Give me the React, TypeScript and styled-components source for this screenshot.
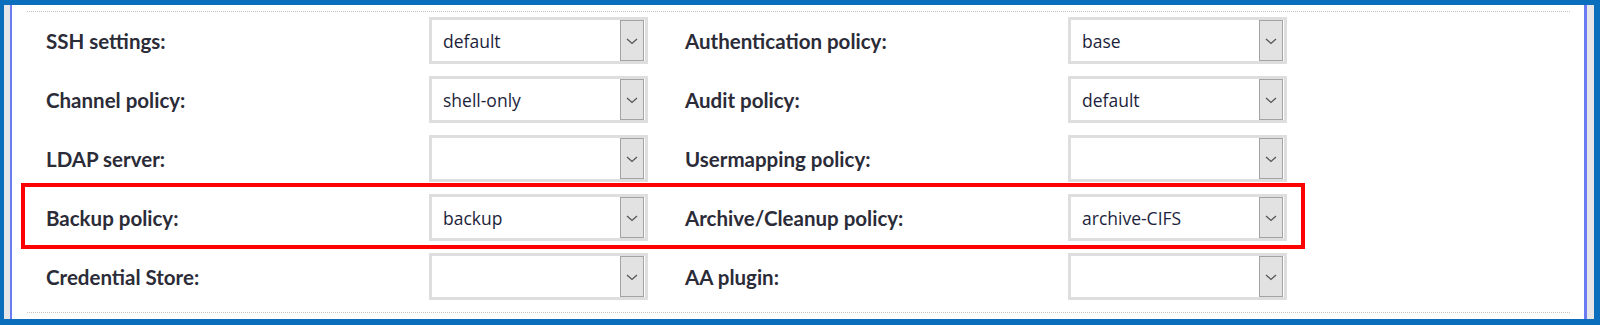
import React from 'react'
import styled, { createGlobalStyle } from 'styled-components'

//#region styled components
const GlobalStyle = createGlobalStyle`
  html, body {
    margin: 0;
    padding: 0;
    background: #ffffff;
  }
  * {
    box-sizing: border-box;
  }
`

const StyledFrame = styled('div')`
  width: 1600px;
  height: 325px;
  border-style: solid;
  border-color: #0a6ebd;
  border-width: 5px 6px 6px 4px;
  display: flex;
  flex-direction: row;
  background-color: white;
`

const StyledScrollStrip = styled('div')<{ $width: number }>`
  width: ${(p) => p.$width}px;
  flex-shrink: 0;
  background-color: #e6e6e8;
`

const StyledEdgeLine = styled('div')<{ $width: number }>`
  width: ${(p) => p.$width}px;
  flex-shrink: 0;
  background-color: #6b7cf2;
`

const StyledPanel = styled('div')`
  flex: 1;
  display: flex;
  flex-direction: column;
  padding-top: 6px;
`

const StyledDottedRule = styled('div')`
  height: 1px;
  margin: 0 14px 0 15px;
  border-top: 1px dotted #c4c4c4;
`

const StyledRows = styled('div')`
  display: flex;
  flex-direction: column;
  padding-bottom: 5px;
`

const StyledRow = styled('div')`
  position: relative;
  height: 59px;
  padding: 5px 0 7px 34px;
  display: grid;
  grid-template-columns: 383px 219px 420px 219px;
  align-items: center;

  & > :nth-child(3) {
    padding-left: 37px;
  }
`

const StyledLabel = styled('div')`
  font-family: Lato, 'Liberation Sans', sans-serif;
  font-weight: 700;
  font-size: 20.5px;
  color: #2b2c38;
  white-space: nowrap;
`

const StyledSelect = styled('div')`
  height: 47px;
  border: 3px solid #dedede;
  display: flex;
  flex-direction: row;
  background-color: white;
`

const StyledSelectValue = styled('div')`
  flex: 1;
  padding-left: 11px;
  display: flex;
  align-items: center;
  font-family: 'Open Sans', 'Noto Sans', sans-serif;
  font-size: 17.5px;
  color: #1d1f3c;
`

const StyledSelectButton = styled('div')`
  width: 24px;
  margin-right: 1px;
  border: 1px solid #a3a3a3;
  background-color: #e2e2e2;
  display: flex;
  align-items: center;
  justify-content: center;
`

const StyledHighlight = styled('div')`
  position: absolute;
  left: 9px;
  top: -6px;
  width: 1284px;
  height: 66px;
  border: 4px solid #ff0000;
  pointer-events: none;
`
//#endregion

interface Field {
  label: string
  value: string
}

interface RowData {
  left: Field
  right: Field
  highlighted?: boolean
}

const rows: RowData[] = [
  { left: { label: 'SSH settings:', value: 'default' }, right: { label: 'Authentication policy:', value: 'base' } },
  { left: { label: 'Channel policy:', value: 'shell-only' }, right: { label: 'Audit policy:', value: 'default' } },
  { left: { label: 'LDAP server:', value: '' }, right: { label: 'Usermapping policy:', value: '' } },
  {
    left: { label: 'Backup policy:', value: 'backup' },
    right: { label: 'Archive/Cleanup policy:', value: 'archive-CIFS' },
    highlighted: true,
  },
  { left: { label: 'Credential Store:', value: '' }, right: { label: 'AA plugin:', value: '' } },
]

const Chevron = () => (
  <svg width="12" height="8" viewBox="0 0 12 8">
    <path d="M1 2 L6 6.5 L11 2" fill="none" stroke="#555" strokeWidth="1.3" />
  </svg>
)

const Select = (props: { value: string }) => {
  return (
    <StyledSelect>
      <StyledSelectValue>{props.value}</StyledSelectValue>
      <StyledSelectButton>
        <Chevron />
      </StyledSelectButton>
    </StyledSelect>
  )
}

const App = () => {
  return (
    <>
      <GlobalStyle />
      <StyledFrame>
        <StyledScrollStrip $width={6} />
        <StyledEdgeLine $width={2} />
        <StyledPanel>
          <StyledDottedRule />
          <StyledRows>
            {rows.map((row) => (
              <StyledRow key={row.left.label}>
                <StyledLabel>{row.left.label}</StyledLabel>
                <Select value={row.left.value} />
                <StyledLabel>{row.right.label}</StyledLabel>
                <Select value={row.right.value} />
                {row.highlighted && <StyledHighlight />}
              </StyledRow>
            ))}
          </StyledRows>
          <StyledDottedRule />
        </StyledPanel>
        <StyledEdgeLine $width={3} />
        <StyledScrollStrip $width={7} />
      </StyledFrame>
    </>
  )
}

export default App
